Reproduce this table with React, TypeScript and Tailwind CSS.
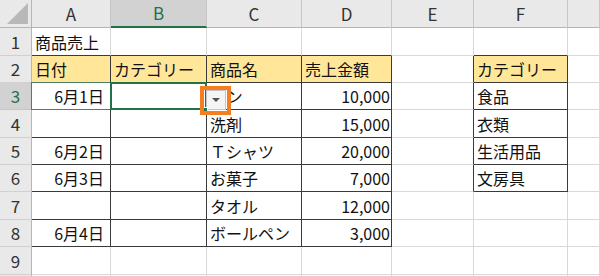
import React from "react";

type Cell = { text: string; align?: "left" | "right"; pad?: "date" | "num"; fill?: boolean };

const COLS = ["A", "B", "C", "D", "E", "F", ""];
const ROWS = [1, 2, 3, 4, 5, 6, 7, 8, 9, 10];

const DATA: Record<string, Cell> = {
  A1: { text: "商品売上" },
  A2: { text: "日付", fill: true },
  B2: { text: "カテゴリー", fill: true },
  C2: { text: "商品名", fill: true },
  D2: { text: "売上金額", fill: true },
  F2: { text: "カテゴリー", fill: true },
  A3: { text: "6月1日", align: "right", pad: "date" },
  C3: { text: "パン" },
  D3: { text: "10,000", align: "right", pad: "num" },
  F3: { text: "食品" },
  C4: { text: "洗剤" },
  D4: { text: "15,000", align: "right", pad: "num" },
  F4: { text: "衣類" },
  A5: { text: "6月2日", align: "right", pad: "date" },
  C5: { text: "Ｔシャツ" },
  D5: { text: "20,000", align: "right", pad: "num" },
  F5: { text: "生活用品" },
  A6: { text: "6月3日", align: "right", pad: "date" },
  C6: { text: "お菓子" },
  D6: { text: "7,000", align: "right", pad: "num" },
  F6: { text: "文房具" },
  C7: { text: "タオル" },
  D7: { text: "12,000", align: "right", pad: "num" },
  A8: { text: "6月4日", align: "right", pad: "date" },
  C8: { text: "ボールペン" },
  D8: { text: "3,000", align: "right", pad: "num" },
};

// Cells that carry the thin dark table border
function inTable(r: number, c: number): boolean {
  if (c >= 0 && c <= 3 && r >= 2 && r <= 8) return true;
  if (c === 5 && r >= 2 && r <= 6) return true;
  return false;
}

const FONT = { fontFamily: '"Noto Sans CJK JP", "Noto Sans", sans-serif' };

function DataCell({ r, c }: { r: number; c: number }) {
  const key = COLS[c] + r;
  const cell = DATA[key];
  const darkRight = inTable(r, c) || inTable(r, c + 1);
  const darkBottom = inTable(r, c) || inTable(r + 1, c);
  const right = darkRight ? "border-r-[#3a3a3a]" : "border-r-[#d9d9d9]";
  const bottom = darkBottom ? "border-b-[#3a3a3a]" : "border-b-[#d9d9d9]";
  const bg = cell?.fill ? "bg-[#ffe699]" : "bg-white";
  const justify = cell?.align === "right" ? "justify-end" : "justify-start";
  const pad =
    cell?.pad === "date" ? "pr-[6px]" : cell?.pad === "num" ? "pr-[1px]" : "pl-[3px]";
  return (
    <div
      className={`relative flex items-center overflow-visible whitespace-nowrap border-r border-b text-[16px] leading-none text-[#111] ${right} ${bottom} ${bg} ${justify} ${pad}`}
    >
      {cell ? <span className="relative z-0">{cell.text}</span> : null}
      {key === "A3" ? (
        <div className="pointer-events-none absolute -left-px -top-px -right-px -bottom-px border border-[#4f7f62]" />
      ) : null}
      {key === "B3" ? (
        <div className="pointer-events-none absolute -left-[1px] -top-[1px] -right-[1px] -bottom-[1px] z-10 border-2 border-[#217346]" />
      ) : null}
    </div>
  );
}

function ColHeader({ label, active }: { label: string; active: boolean }) {
  return (
    <div
      className={
        active
          ? "flex items-center justify-center border-r border-r-[#c6c6c6] border-b-2 border-b-[#217346] bg-[#d2d2d2] text-[17px] text-[#217346]"
          : "flex items-center justify-center border-r border-r-[#c6c6c6] border-b border-b-[#b5b5b5] bg-[#e9e9e9] text-[17px] text-[#333]"
      }
    >
      {label}
    </div>
  );
}

function RowHeader({ n, active }: { n: number; active: boolean }) {
  return (
    <div
      className={
        active
          ? "flex items-center justify-center border-r border-r-[#217346] border-b border-b-[#c6c6c6] bg-[#d2d2d2] text-[17px] text-[#217346]"
          : "flex items-center justify-center border-r border-r-[#b5b5b5] border-b border-b-[#d0d0d0] bg-[#e9e9e9] text-[17px] text-[#333]"
      }
    >
      {n < 10 ? n : ""}
    </div>
  );
}

export default function App() {
  return (
    <div className="relative h-[276px] w-[600px] overflow-hidden bg-white" style={FONT}>
      <div className="grid grid-cols-[32px_79px_96px_95px_90px_82px_94px_32px] grid-rows-[28px_28px_27px_27px_28px_27px_27px_28px_27px_28px_20px]">
        {/* corner */}
        <div className="relative border-r border-r-[#b5b5b5] border-b border-b-[#b5b5b5] bg-[#e9e9e9]">
          <svg className="absolute right-[3px] bottom-[3px]" width="21" height="21" viewBox="0 0 20 20">
            <polygon points="20,0 20,20 0,20" fill="#b8b8b8" />
          </svg>
        </div>
        {COLS.map((l, i) => (
          <ColHeader key={i} label={l} active={l === "B"} />
        ))}
        {ROWS.map((r) => (
          <React.Fragment key={r}>
            <RowHeader n={r} active={r === 3} />
            {COLS.map((_, c) => (
              <DataCell key={c} r={r} c={c} />
            ))}
          </React.Fragment>
        ))}
      </div>

      {/* in-cell list dropdown button */}
      <div className="absolute left-[206px] top-[90px] z-20 flex h-[20px] w-[20px] items-center justify-center border border-[#c4c4c4] bg-[#f4f4f4]">
        <svg width="8" height="5" viewBox="0 0 8 5">
          <polygon points="0,0 8,0 4,4" fill="#505050" />
        </svg>
      </div>
      {/* fill handle */}
      <div className="absolute left-[203px] top-[107px] z-30 h-[5px] w-[5px] border border-white bg-[#217346]" />
      {/* highlight frame */}
      <div className="absolute left-[200px] top-[86px] z-40 h-[29px] w-[31px] border-[4px] border-[#f57f20]" />
    </div>
  );
}
